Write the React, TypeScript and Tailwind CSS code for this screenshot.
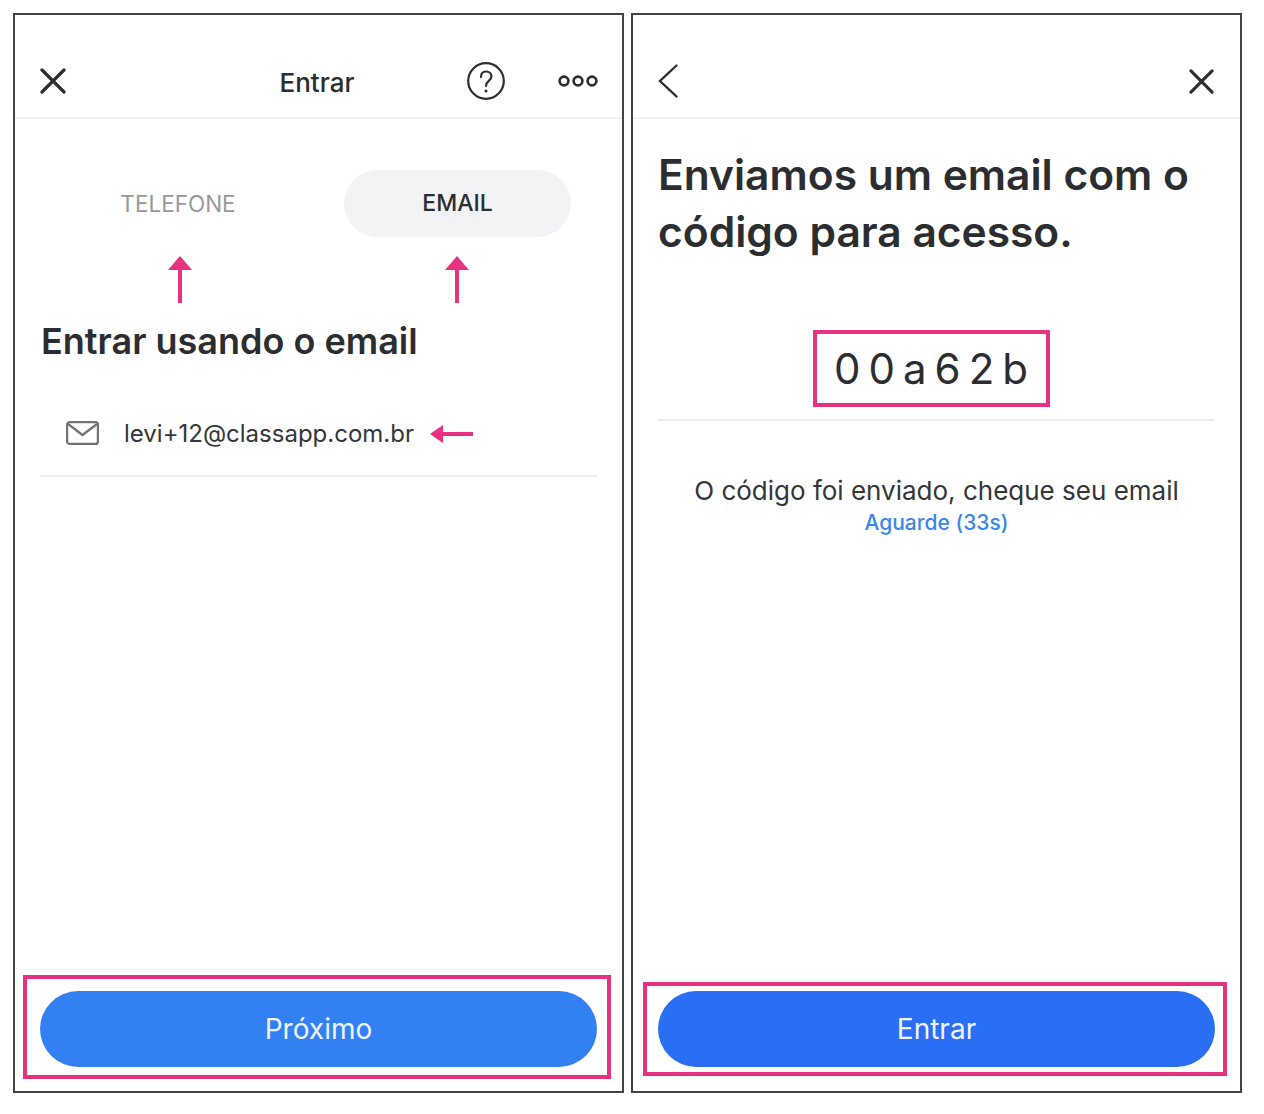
import React from 'react';

const font = "font-['Inter','Liberation_Sans',sans-serif]";

const CloseIcon: React.FC<{ className?: string }> = ({ className }) => (
  <svg viewBox="0 0 26 26" className={className} fill="none" stroke="#2b2d31" strokeWidth="3.2" strokeLinecap="round">
    <path d="M2 2 L24 24 M24 2 L2 24" />
  </svg>
);

const PinkArrowUp: React.FC = () => (
  <svg viewBox="0 0 24 48" className="w-6 h-12" fill="#e6327f">
    <path d="M12 0 L24 14 L14 14 L14 47 L10 47 L10 14 L0 14 Z" />
  </svg>
);

const Button: React.FC<{ label: string; color: string }> = ({ label, color }) => (
  <button className={`h-[76px] w-[557px] rounded-full text-[28px] text-[#eef4ff] flex items-center justify-center ${color}`}>
    {label}
  </button>
);

const LoginPanel: React.FC = () => (
  <section className="w-[611px] h-[1080px] border-2 border-[#444] bg-white flex flex-col">
    <header className="h-[104px] shrink-0 border-b-2 border-[#f1f1f1] flex items-center pt-[30px] pl-[25px]">
      <CloseIcon className="w-[26px] h-[26px]" />
      <h2 className="ml-[212px] w-[78px] pt-[3px] text-center text-[26px] font-medium text-[#2b2d31] whitespace-nowrap">Entrar</h2>
      <svg viewBox="0 0 38 38" className="ml-[111px] w-[38px] h-[38px]" fill="none" stroke="#2b2d31" strokeWidth="2.2">
        <circle cx="19" cy="19" r="17.8" />
        <path d="M14 15 C14 11 16.5 9.5 19 9.5 C22 9.5 24.5 11.5 24.5 14.5 C24.5 18.5 19 19 19 24" strokeLinecap="round" />
        <circle cx="19" cy="29" r="1.5" fill="#2b2d31" stroke="none" />
      </svg>
      <svg viewBox="0 0 40 12" className="ml-[53px] w-10 h-3" fill="none" stroke="#2b2d31" strokeWidth="2.6">
        <circle cx="6" cy="6" r="4.4" />
        <circle cx="20" cy="6" r="4.4" />
        <circle cx="34" cy="6" r="4.4" />
      </svg>
    </header>

    <div className="mt-[51px] flex pl-[73px]">
      <div className="w-[180px] h-[67px] flex items-center justify-center text-[22.5px] text-[#96999c] whitespace-nowrap">TELEFONE</div>
      <div className="ml-[76px] w-[227px] h-[67px] rounded-[34px] bg-[#f2f3f5] flex items-center justify-center text-[23px] font-medium text-[#2b2d31]">EMAIL</div>
    </div>

    <div className="mt-[19px] flex pl-[153px]">
      <PinkArrowUp />
      <div className="ml-[253px]">
        <PinkArrowUp />
      </div>
    </div>

    <h1 className="mt-[11px] ml-[26px] text-[36px] leading-[52px] font-semibold text-[#2b2d31] whitespace-nowrap">Entrar usando o email</h1>

    <div className="mt-[45px] ml-[25px] h-[65px] w-[557px] border-b-2 border-[#ececec] flex items-start pl-[26px]">
      <svg viewBox="0 0 33 24" className="w-[33px] h-6 mt-[9px]" fill="none" stroke="#6f7478" strokeWidth="2.2">
        <rect x="1.1" y="1.1" width="30.8" height="21.8" rx="2.5" />
        <path d="M2 3 L16.5 14 L31 3" />
      </svg>
      <span className="ml-[25px] mt-[7px] text-[24px] leading-[30px] text-[#33363a] whitespace-nowrap">levi+12@classapp.com.br</span>
      <svg viewBox="0 0 43 18" className="ml-[16px] mt-[13px] w-[43px] h-[18px]" fill="#e6327f">
        <path d="M0 9 L13 0 L13 7 L43 7 L43 11 L13 11 L13 18 Z" />
      </svg>
    </div>

    <div className="mt-auto mb-[12px] ml-[8px] w-[588px] h-[104px] border-[4px] border-[#e6327f] pt-[12px] pl-[13px]">
      <Button label="Próximo" color="bg-[#3380f3]" />
    </div>
  </section>
);

const CodePanel: React.FC = () => (
  <section className="w-[611px] h-[1080px] border-2 border-[#444] bg-white flex flex-col">
    <header className="h-[104px] shrink-0 border-b-2 border-[#f1f1f1] flex items-center justify-between pt-[30px] pl-[25px] pr-[26px]">
      <svg viewBox="0 0 20 34" className="w-5 h-[34px]" fill="none" stroke="#2b2d31" strokeWidth="2.4" strokeLinecap="round">
        <path d="M18.5 1.5 L2 17 L18.5 32.5" />
      </svg>
      <CloseIcon className="w-[25px] h-[25px]" />
    </header>

    <h1 className="mt-[27px] ml-[25px] text-[42.5px] leading-[57px] font-semibold text-[#2b2d31] whitespace-nowrap">
      Enviamos um email com o<br />código para acesso.
    </h1>

    <div className="mt-[70px] ml-[25px] w-[556px] border-b-2 border-[#ececec] pb-[12px] pr-[10px] flex justify-center">
      <div className="w-[237px] h-[77px] border-[4px] border-[#e6327f] pl-[8px] flex items-center justify-center text-[42px] tracking-[8px] text-[#2b2d31]">
        00a62b
      </div>
    </div>

    <p className="mt-[54px] text-center text-[26px] leading-[32px] text-[#33363a]">O código foi enviado, cheque seu email</p>
    <p className="mt-[1px] text-center text-[21px] leading-[30px] font-medium text-[#3a87e6]">Aguarde (33s)</p>

    <div className="mt-auto mb-[15px] ml-[10px] w-[584px] h-[94px] border-[4px] border-[#e6327f] pt-[5px] pl-[11px]">
      <Button label="Entrar" color="bg-[#2a6ef3]" />
    </div>
  </section>
);

const App: React.FC = () => {
  return (
    <div className={`w-[1264px] h-[1114px] bg-white flex gap-[7px] pt-[13px] pl-[13px] ${font}`}>
      <LoginPanel />
      <CodePanel />
    </div>
  );
};

export default App;
